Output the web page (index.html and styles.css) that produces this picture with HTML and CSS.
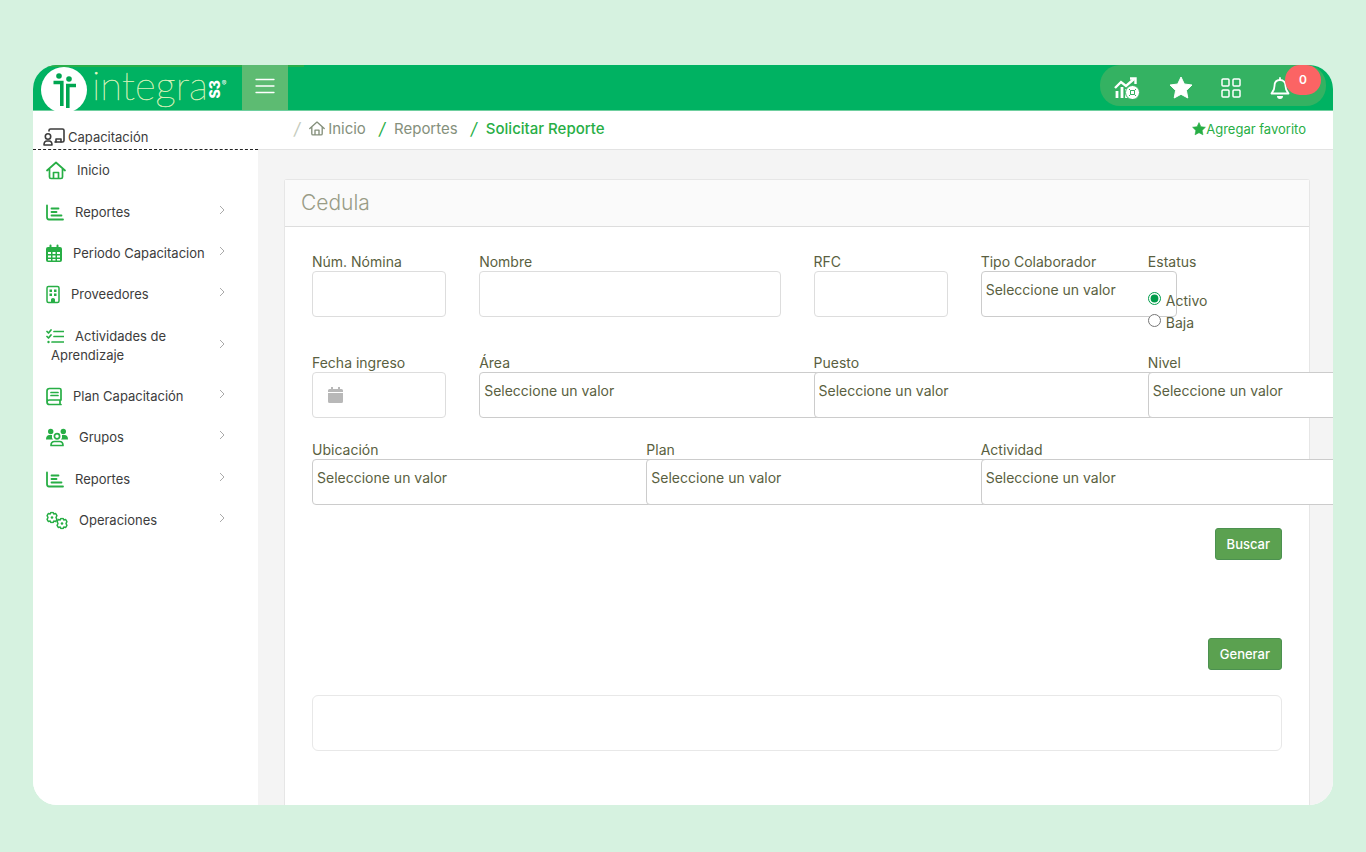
FILE: index.html
```html
<!DOCTYPE html>
<html lang="es">
<head>
  <meta charset="utf-8">
  <meta name="viewport" content="width=device-width, initial-scale=1">
  <title>Integra S3 - Solicitar Reporte</title>
  <link rel="stylesheet" href="styles.css">
</head>

<body>
  <!-- iconos que se repiten -->
  <svg class="sprite" aria-hidden="true">
    <symbol id="i-casa" viewBox="0 0 20 18">
      <path d="M1 9 10 1l9 8M3.500 7v8.500a1.500 1.500 0 0 0 1.500 1.500h10a1.500 1.500 0 0 0 1.500-1.500V7M7.500 17v-6h5v6" fill="none" stroke="currentColor" stroke-width="1.700" stroke-linecap="round" stroke-linejoin="round"/>
    </symbol>
    <symbol id="i-barras" viewBox="0 0 18 16">
      <path d="M1 1v11.500Q1 15 3 15H17M5.500 4h7M5.500 7.500h5M5.500 11h10" fill="none" stroke="currentColor" stroke-width="1.800" stroke-linecap="round"/>
    </symbol>
    <symbol id="i-estrella" viewBox="0 0 24 24">
      <path d="m12 1 3.300 7 7.700 1-5.600 5.400 1.400 7.600L12 18.300 5.200 22l1.400-7.600L1 9l7.700-1z" fill="currentColor" stroke="currentColor" stroke-width="1" stroke-linejoin="round"/>
    </symbol>
    <symbol id="i-flecha" viewBox="0 0 6 10">
      <path d="m1 1 4 4-4 4" fill="none" stroke="currentColor" stroke-width="1"/>
    </symbol>
    <symbol id="i-engrane" viewBox="-6 -6 12 12">
      <path d="M-1.200-5h2.400l.6 1.500L3.700-4l1.200 2.200L4 0l.9 1.800L3.700 4l-1.900-.5L1.200 5h-2.400l-.6-1.500L-3.700 4l-1.200-2.200L-4 0l-.9-1.800L-3.700-4l1.900.5z" fill="none" stroke="currentColor" stroke-width="1.500" stroke-linejoin="round"/>
      <circle r="1.300" fill="currentColor"/>
    </symbol>
  </svg>

  <div class="ventana">
    <header class="barra">
      <a class="logo" href="#" aria-label="Integra S3">
        <svg class="logo-icono" viewBox="0 0 46 46" aria-hidden="true">
          <circle cx="23" cy="23" r="23" fill="#fff"/>
          <g fill="#00a651">
            <circle cx="18" cy="9" r="2.800"/>
            <circle cx="28" cy="12" r="2.800"/>
          </g>
          <g fill="none" stroke="#00a651" stroke-width="3.600">
            <path d="M12.500 15.500h8.300v23.500"/>
            <path d="M35 18.500h-8.200v22.500"/>
          </g>
          <path d="M23.800 13v28" stroke="#fff" stroke-width="1.600"/>
        </svg>
        <span class="logo-texto">integra</span>
        <span class="logo-s3">S3</span>
        <span class="logo-marca">®</span>
      </a>
      <button class="menu" type="button" aria-label="Menú">
        <svg width="20" height="16" viewBox="0 0 20 16"><path d="M1 1.500h18M1 8h18M1 14.500h18" stroke="currentColor" stroke-width="1.300" stroke-linecap="round"/></svg>
      </button>
      <nav class="accesos">
        <a href="#" aria-label="Indicadores">
          <svg width="26" height="22" viewBox="0 0 26 22" fill="none" stroke="currentColor" stroke-width="2.400">
            <path d="m1 11 6-6 5 4 8-7"/>
            <path d="M16 1.500h5.500V7" stroke-width="2.400"/>
            <path d="M3 14v7M8 10v11M12.500 12v9" stroke-width="2.800"/>
            <circle cx="18.500" cy="15.500" r="7" fill="currentColor" stroke="#34b262" stroke-width="1"/>
            <path d="M16.500 13.500h4v4h-4zM15 12l1.500 1.500M22 12l-1.500 1.500M15 19l1.500-1.500M22 19l-1.500-1.500" stroke="#34b262" stroke-width="1"/>
          </svg>
        </a>
        <a href="#" aria-label="Favoritos"><svg width="24" height="24"><use href="#i-estrella"/></svg></a>
        <a href="#" aria-label="Aplicaciones">
          <svg width="20" height="20" viewBox="0 0 20 20" fill="none" stroke="currentColor" stroke-width="1.500">
            <rect x="1" y="1" width="7" height="7" rx="1"/><rect x="12" y="1" width="7" height="7" rx="1"/>
            <rect x="1" y="12" width="7" height="7" rx="1"/><rect x="12" y="12" width="7" height="7" rx="1"/>
          </svg>
        </a>
        <a class="avisos" href="#" aria-label="Notificaciones">
          <svg width="20" height="22" viewBox="0 0 20 22" fill="none" stroke="currentColor" stroke-width="1.800" stroke-linejoin="round">
            <path d="M10 3C6.500 3 4.500 5.500 4.500 9c0 4-1.500 5.500-3 7.500h17c-1.500-2-3-3.500-3-7.500 0-3.500-2-6-5.500-6zM10 3V1" stroke-linecap="round"/>
            <path d="M7 19h6a3 3 0 0 1-6 0z" fill="currentColor" stroke="none"/>
          </svg>
          <span class="contador">0</span>
        </a>
      </nav>
    </header>

    <div class="cuerpo">
      <aside class="lateral">
        <h2 class="modulo">
          <svg width="22" height="18" viewBox="0 0 22 18" fill="none" stroke="currentColor" stroke-width="1.600" stroke-linecap="round" stroke-linejoin="round">
            <path d="M6 3V2.500Q6 1 7.500 1h12Q21 1 21 2.500v10q0 1.500-1.500 1.500H12"/>
            <circle cx="5" cy="8.500" r="2.700"/>
            <path d="M1 17q0-4 3-4h2q3 0 3 4zM13 14v-3h5v3"/>
          </svg>
          Capacitación
        </h2>
        <ul class="opciones">
          <li><a href="#"><span><svg width="20" height="18"><use href="#i-casa"/></svg>Inicio</span></a></li>
          <li><a href="#"><span><svg width="18" height="16"><use href="#i-barras"/></svg>Reportes</span><svg class="flecha"><use href="#i-flecha"/></svg></a></li>
          <li><a href="#"><span><svg width="16" height="18" viewBox="0 0 16 18"><path d="M4.500 1v3M11.500 1v3" stroke="currentColor" stroke-width="2" stroke-linecap="round"/><rect y="2.500" width="16" height="15" rx="2" fill="currentColor"/><path d="M2 7.500h3v2H2zM6.500 7.500h3v2h-3zM11 7.500h3v2h-3zM2 11h3v2H2zM6.500 11h3v2h-3zM11 11h3v2h-3zM2 14.500h3V16H2zM6.500 14.500h3V16h-3zM11 14.500h3V16h-3z" fill="#fff"/></svg>Periodo Capacitacion</span><svg class="flecha"><use href="#i-flecha"/></svg></a></li>
          <li><a href="#"><span><svg width="14" height="18" viewBox="0 0 14 18"><rect x="1" y="1" width="12" height="16" rx="1.500" fill="none" stroke="currentColor" stroke-width="1.500"/><path d="M3.500 4H6v2.500H3.500zM8 4h2.500v2.500H8zM3.500 8H6v2.500H3.500zM8 8h2.500v2.500H8zM5 17v-3q0-1.500 2-1.500T9 14v3z" fill="currentColor"/></svg>Proveedores</span><svg class="flecha"><use href="#i-flecha"/></svg></a></li>
          <li><a href="#"><span><svg width="18" height="16" viewBox="0 0 18 16"><path d="m1 3 1.500 1.500L5 1.500M1 8l1.500 1.500L5 6.500M8 3h9.500M8 8h9.500M6 13.500h11.500" fill="none" stroke="currentColor" stroke-width="1.700" stroke-linecap="round" stroke-linejoin="round"/><circle cx="2.500" cy="13.500" r="1.200" fill="currentColor"/></svg>Actividades de Aprendizaje</span><svg class="flecha"><use href="#i-flecha"/></svg></a></li>
          <li><a href="#"><span><svg width="16" height="18" viewBox="0 0 16 18"><path d="M15 12.500v-10Q15 1 13.500 1h-10Q1 1 1 3.500v11Q1 17 3.500 17H15M14 12.500V17M15 12.500H3.500Q1 12.500 1 14.800M5 5h7M5 8h7" fill="none" stroke="currentColor" stroke-width="1.700" stroke-linecap="round"/></svg>Plan Capacitación</span><svg class="flecha"><use href="#i-flecha"/></svg></a></li>
          <li><a href="#"><span><svg width="22" height="18" viewBox="0 0 22 18"><g fill="currentColor"><circle cx="4.700" cy="3" r="2.700"/><circle cx="17.300" cy="3" r="2.700"/><path d="M0 11q0-4.500 3.500-4.500H6Q5.500 9.500 7 11zM22 11q0-4.500-3.500-4.500H16q.5 3-1 4.500z"/></g><g fill="none" stroke="currentColor" stroke-width="1.700" stroke-linejoin="round"><circle cx="11" cy="7.800" r="2.600"/><path d="M5 17q0-4 3.500-4h5q3.500 0 3.500 4z"/></g></svg>Grupos</span><svg class="flecha"><use href="#i-flecha"/></svg></a></li>
          <li><a href="#"><span><svg width="18" height="16"><use href="#i-barras"/></svg>Reportes</span><svg class="flecha"><use href="#i-flecha"/></svg></a></li>
          <li><a href="#"><span><svg width="22" height="18" viewBox="0 0 22 18"><use href="#i-engrane" x="0" y="0" width="12" height="12"/><use href="#i-engrane" x="10" y="6" width="12" height="12"/></svg>Operaciones</span><svg class="flecha"><use href="#i-flecha"/></svg></a></li>
        </ul>
      </aside>

      <main class="principal">
        <div class="ruta">
          <nav>
            <i class="tenue">/</i>
            <a href="#"><svg width="16" height="15"><use href="#i-casa"/></svg> Inicio</a>
            <i>/</i>
            <a href="#">Reportes</a>
            <i>/</i>
            <strong>Solicitar Reporte</strong>
          </nav>
          <a class="favorito" href="#"><svg width="14" height="14"><use href="#i-estrella"/></svg>Agregar favorito</a>
        </div>

        <section class="tarjeta">
          <h1>Cedula</h1>
          <form class="formulario">
            <div class="campos">
              <div class="campo">
                <label for="nomina">Núm. Nómina</label>
                <input type="text" id="nomina">
              </div>
              <div class="campo doble">
                <label for="nombre">Nombre</label>
                <input type="text" id="nombre">
              </div>
              <div class="campo">
                <label for="rfc">RFC</label>
                <input type="text" id="rfc">
              </div>
              <div class="campo">
                <label for="tipo">Tipo Colaborador</label>
                <select id="tipo" class="medio"><option>Seleccione un valor</option></select>
              </div>
              <fieldset class="campo estatus">
                <legend>Estatus</legend>
                <label><input type="radio" name="estatus" checked> Activo</label>
                <label><input type="radio" name="estatus"> Baja</label>
              </fieldset>

              <div class="campo">
                <label for="fecha">Fecha ingreso</label>
                <div class="fecha">
                  <svg width="15" height="16" viewBox="0 0 15 16" fill="currentColor"><path d="M0 5V3.500Q0 2 1.500 2H3V0h2v2h5V0h2v2h1.500Q15 2 15 3.500V5zM0 6h15v8.500q0 1.500-1.500 1.500h-12Q0 16 0 14.500z"/></svg>
                  <input type="text" id="fecha">
                </div>
              </div>
              <div class="campo doble">
                <label for="area">Área</label>
                <select id="area"><option>Seleccione un valor</option></select>
              </div>
              <div class="campo doble">
                <label for="puesto">Puesto</label>
                <select id="puesto"><option>Seleccione un valor</option></select>
              </div>
              <div class="campo">
                <label for="nivel">Nivel</label>
                <select id="nivel"><option>Seleccione un valor</option></select>
              </div>

              <div class="campo doble">
                <label for="ubicacion">Ubicación</label>
                <select id="ubicacion"><option>Seleccione un valor</option></select>
              </div>
              <div class="campo doble">
                <label for="plan">Plan</label>
                <select id="plan"><option>Seleccione un valor</option></select>
              </div>
              <div class="campo doble">
                <label for="actividad">Actividad</label>
                <select id="actividad"><option>Seleccione un valor</option></select>
              </div>
            </div>
            <div class="acciones">
              <button type="button">Buscar</button>
            </div>
            <div class="acciones generar">
              <button type="button">Generar</button>
            </div>
            <div class="resultado"></div>
          </form>
        </section>
      </main>
    </div>
  </div>
</body>
</html>
```

FILE: styles.css
```css
* {
  box-sizing: border-box;
}

body {
  margin: 0;
  height: 100vh;
  padding: 65px 33px 47px;
  background-color: #d6f2e0;
  font-family: Inter, "Noto Sans", sans-serif;
  font-size: 14px;
  color: #5a5f41;
}

a {
  color: inherit;
  text-decoration: none;
}

svg {
  flex: none;
}

.sprite {
  display: none;
}

.ventana {
  height: 100%;
  display: flex;
  flex-direction: column;
  overflow: hidden;
  border-radius: 24px;
  background-color: #fff;
}

/* barra superior */
.barra {
  display: flex;
  flex: none;
  height: 46px;
  background: linear-gradient(#2aae4a, #2aae4a) no-repeat 0 0 / 271px 2px #00b262;
  border-bottom: 1px solid #6fcf9f;
  color: #fff;
}

.logo {
  display: flex;
  align-items: center;
  width: 209px;
  padding-left: 8px;
}

.logo-icono {
  width: 46px;
  height: 46px;
  margin-top: 4px;
}

.logo-texto {
  margin-left: 5px;
  padding-bottom: 6px;
  font-family: Lato, sans-serif;
  font-weight: 100;
  font-size: 40px;
  line-height: 38px;
  color: #e8ffd0;
  -webkit-text-stroke: 0.4px #d3efb5;
}

.logo-s3 {
  writing-mode: vertical-rl;
  transform: rotate(180deg);
  margin-top: 3px;
  font-size: 14px;
  font-weight: 800;
  line-height: 14px;
}

.logo-marca {
  align-self: flex-start;
  margin-top: 14px;
  font-size: 7px;
}

.menu {
  width: 46px;
  padding: 0;
  border: none;
  background-color: #5dbb72;
  color: #fff;
  cursor: pointer;
}

.accesos {
  display: flex;
  align-items: center;
  justify-content: space-between;
  width: 226px;
  height: 41px;
  margin-left: auto;
  margin-right: 7px;
  padding: 8px 36px 0 14px;
  border-radius: 20px;
  background-color: #34b262;
}

.avisos {
  position: relative;
}

.contador {
  position: absolute;
  left: 15px;
  top: -12px;
  width: 36px;
  height: 30px;
  border-radius: 15px;
  background-color: #fb6464;
  text-align: center;
  line-height: 30px;
  font-size: 12px;
  font-weight: 600;
}

.cuerpo {
  display: flex;
  flex: 1;
  min-height: 0;
}

/* menu lateral */
.lateral {
  flex: none;
  width: 225px;
  background-color: #fff;
  color: #3c3c3c;
}

.modulo {
  display: flex;
  align-items: flex-end;
  gap: 3px;
  height: 39px;
  margin: 0;
  padding: 0 10px 3px;
  border-bottom: 1px dashed #222;
  font-size: 13px;
  font-weight: 400;
  line-height: 18px;
}

.opciones {
  margin: 0;
  padding: 0;
  list-style: none;
  font-size: 13px;
  line-height: 19px;
}

.opciones a {
  display: flex;
  align-items: center;
  justify-content: space-between;
  padding: 11px 33px 11px 18px;
}

.opciones li:nth-child(3n + 1) a {
  padding-bottom: 12px;
}

.opciones span {
  max-width: 160px;
  text-indent: -5px;
}

.opciones span svg {
  height: 19px;
  margin-right: 11px;
  vertical-align: top;
  color: #27ae45;
}

.opciones .flecha {
  width: 6px;
  height: 10px;
  margin: 0 0 5px -6px;
  color: #aaa;
}

/* contenido */
.principal {
  display: flex;
  flex-direction: column;
  flex: 1;
  min-width: 0;
  background-color: #f4f4f4;
}

.ruta {
  display: flex;
  flex: none;
  align-items: center;
  justify-content: space-between;
  height: 39px;
  padding: 0 27px 3px 36px;
  border-bottom: 1px solid #e3e3e3;
  background-color: #fff;
  font-size: 15px;
  color: #85907c;
}

.ruta nav {
  display: flex;
  align-items: center;
}

.ruta nav a {
  display: flex;
  align-items: center;
  gap: 3px;
}

.ruta i {
  margin: 0 9px 0 13px;
  color: #27ae45;
  font-size: 17px;
}

.ruta i.tenue {
  margin-left: 0;
  color: #c5cbbd;
}

.ruta strong {
  font-weight: 500;
  color: #27ae45;
}

.favorito {
  display: flex;
  align-items: center;
  font-size: 13px;
  color: #27ae45;
}

.tarjeta {
  flex: 1;
  margin: 29px 23px 0 26px;
  border: 1px solid #e6e6e6;
  border-bottom: none;
  border-radius: 3px 3px 0 0;
  background-color: #fff;
}

.tarjeta h1 {
  margin: 0;
  padding: 8px 16px;
  border-bottom: 1px solid #ddd;
  background-color: #fafafa;
  font-size: 21px;
  font-weight: 300;
  line-height: 30px;
  color: #999c86;
}

.formulario {
  padding: 26px 27px;
}

.campos {
  display: grid;
  grid-template-columns: repeat(6, minmax(0, 1fr));
  gap: 23px 33px;
}

.doble {
  grid-column: span 2;
}

.campo > label,
.campo legend {
  display: block;
  padding: 0;
  line-height: 18px;
}

.campo input[type="text"],
.campo select {
  display: block;
  width: 100%;
  height: 46px;
  padding: 0 5px;
  border: 1px solid #ddd;
  border-radius: 4px;
  background-color: #fff;
  color: inherit;
  font-family: inherit;
  font-size: 14px;
}

.campo select {
  width: 400px;
  padding: 0 4px 9px;
  border-color: #ccc;
  appearance: none;
}

.campo select.medio {
  width: 196px;
}

.fecha {
  display: grid;
  align-items: center;
}

.fecha > * {
  grid-area: 1 / 1;
}

.fecha svg {
  z-index: 1;
  margin-left: 16px;
  color: #b8b8b8;
}

.estatus {
  min-width: 0;
  margin: 0;
  padding: 0;
  border: none;
}

.estatus legend {
  margin-bottom: 16px;
}

.estatus label {
  display: flex;
  align-items: flex-start;
  gap: 5px;
  height: 22px;
  line-height: 28px;
}

.estatus input {
  width: 13px;
  height: 13px;
  margin: 5px 0 0;
  accent-color: #009c4a;
}

.acciones {
  display: flex;
  justify-content: flex-end;
  margin-top: 23px;
}

.acciones button {
  height: 32px;
  padding: 0 11px;
  border: 1px solid #4c9150;
  border-radius: 3px;
  background-color: #5ba150;
  color: #fff;
  font-family: inherit;
  font-size: 13px;
  font-weight: 500;
  cursor: pointer;
}

.generar {
  margin-top: 78px;
}

.resultado {
  height: 56px;
  margin-top: 25px;
  border: 1px solid #e8e8e8;
  border-radius: 6px;
}
```
